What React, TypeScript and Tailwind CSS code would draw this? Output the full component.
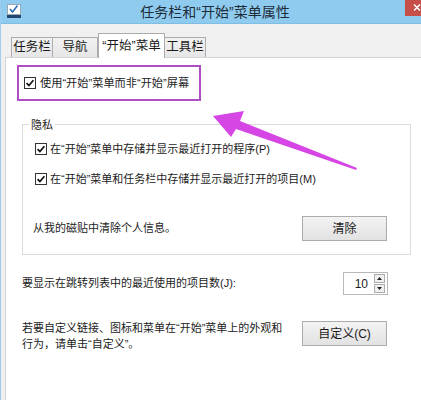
import { ReactNode } from 'react';

function CheckBox() {
  return (
    <svg width="12" height="12" viewBox="0 0 12 12" className="shrink-0">
      <rect x="0.5" y="0.5" width="11" height="11" fill="#ffffff" stroke="#333333" />
      <path d="M2.6 6.2 L4.9 8.6 L9.4 3.2" fill="none" stroke="#111111" strokeWidth="1.7" />
    </svg>
  );
}

function WinButton({ children }: { children: ReactNode }) {
  return (
    <div className="w-[85px] h-[25px] flex items-center justify-center border border-[#acacac] bg-gradient-to-b from-[#f3f3f3] to-[#e2e2e2] text-[12px] text-[#1a1a1a]">
      {children}
    </div>
  );
}

function Tab({ label, width, active }: { label: string; width: string; active?: boolean }) {
  if (active) {
    return (
      <div className={`${width} h-[25px] flex items-center justify-center bg-white border border-b-0 border-[#acacac] text-[12.5px] text-[#1a1a1a] -mb-px relative`}>
        {label}
      </div>
    );
  }
  return (
    <div className={`${width} h-[20px] flex items-center justify-center bg-gradient-to-b from-[#f2f2f2] to-[#e6e6e6] border border-b-0 border-[#acacac] -ml-px first:ml-0 text-[12.5px] text-[#1a1a1a]`}>
      {label}
    </div>
  );
}

export default function App() {
  return (
    <div className="w-[421px] h-[400px] bg-[#f0f0f0] overflow-hidden relative font-['Liberation_Sans','Noto_Sans_CJK_SC',sans-serif] text-[#1c1c1c] border-l border-[#9ccdec]">
      {/* title bar */}
      <div className="h-[24px] bg-[#8ecbef] border-b border-[#7fbde2] flex items-start">
        <svg width="14" height="14" viewBox="0 0 14 14" className="ml-[6px] mt-[4px] shrink-0">
          <rect x="0.5" y="0.5" width="13" height="10" fill="#ffffff" stroke="#9aa7b4" />
          <path d="M3 5 L5.5 8 L10.5 1.5" fill="none" stroke="#2a6fb8" strokeWidth="1.6" />
          <rect x="0" y="11" width="14" height="3" fill="#21466f" />
        </svg>
        <div className="flex-1 min-w-0 text-center text-[14px] leading-[24px] pl-[4px] text-[#1e2b38]">任务栏和“开始”菜单属性</div>
        <svg width="16" height="16" viewBox="0 0 16 16" className="shrink-0 block">
          <rect x="0" y="0" width="16" height="16" fill="#c74f4a" />
          <path d="M9 4.5 L15 10.5 M15 4.5 L9 10.5" stroke="#ffffff" strokeWidth="1.5" />
        </svg>
      </div>

      {/* tabs */}
      <div className="flex items-end h-[33px] pl-[10px]">
        <Tab label="任务栏" width="w-[42px]" />
        <Tab label="导航" width="w-[46px]" />
        <Tab label="“开始”菜单" width="w-[67px]" active />
        <Tab label="工具栏" width="w-[42px]" />
      </div>

      {/* panel */}
      <div className="ml-[4px] h-[343px] bg-white border-l border-t border-[#d5d5d5] flex flex-col text-[11px]">
        <div className="ml-[11px] mt-[7px] w-[184px] h-[36px] border-2 border-[#b04ec6] flex items-center gap-[4px] pl-[5px]">
          <CheckBox />
          <span className="text-[11.2px]">使用“开始”菜单而非“开始”屏幕</span>
        </div>

        {/* privacy group */}
        <div className="ml-[16px] mt-[23px] w-[389px] h-[131px] border border-[#dcdcdc] relative flex flex-col">
          <span className="absolute left-[6px] -top-[8px] px-[2px] bg-white leading-[16px]">隐私</span>
          <div className="mt-[16px] ml-[12px] h-[16px] flex items-center gap-[3px]">
            <CheckBox />
            <span>在“开始”菜单中存储并显示最近打开的程序(P)</span>
          </div>
          <div className="mt-[14px] ml-[12px] h-[16px] flex items-center gap-[3px]">
            <CheckBox />
            <span>在“开始”菜单和任务栏中存储并显示最近打开的项目(M)</span>
          </div>
          <div className="mt-[29px] ml-[10px] mr-[23px] flex items-center justify-between">
            <span>从我的磁贴中清除个人信息。</span>
            <WinButton>清除</WinButton>
          </div>
        </div>

        {/* jump list count */}
        <div className="ml-[16px] mt-[17px] w-[366px] flex items-center justify-between">
          <span>要显示在跳转列表中的最近使用的项目数(J):</span>
          <div className="w-[45px] h-[23px] border border-[#b5b8bd] bg-white flex items-center">
            <span className="flex-1 text-right pr-[6px] text-[12px]">10</span>
            <div className="w-[11px] h-[19px] mr-[2px] flex flex-col gap-px">
              <div className="flex-1 border border-[#acacac] bg-[#f0f0f0] flex items-center justify-center">
                <svg width="5" height="3" viewBox="0 0 5 3"><path d="M0 3 L2.5 0 L5 3 Z" fill="#222" /></svg>
              </div>
              <div className="flex-1 border border-[#acacac] bg-[#f0f0f0] flex items-center justify-center">
                <svg width="5" height="3" viewBox="0 0 5 3"><path d="M0 0 L2.5 3 L5 0 Z" fill="#222" /></svg>
              </div>
            </div>
          </div>
        </div>

        {/* customize */}
        <div className="ml-[16px] mt-[26px] w-[365px] flex items-start justify-between">
          <p className="leading-[16px] mt-[-1px]">
            若要自定义链接、图标和菜单在“开始”菜单上的外观和
            <br />
            行为，请单击“自定义”。
          </p>
          <WinButton>自定义(C)</WinButton>
        </div>
      </div>

      {/* annotation arrow */}
      <svg className="absolute left-0 top-0 pointer-events-none" width="421" height="400" viewBox="0 0 421 400">
        <polygon
          points="212,116 243,111 239,121 356,168 355,170 235,129 230,137"
          fill="#d546e4"
        />
      </svg>
    </div>
  );
}
